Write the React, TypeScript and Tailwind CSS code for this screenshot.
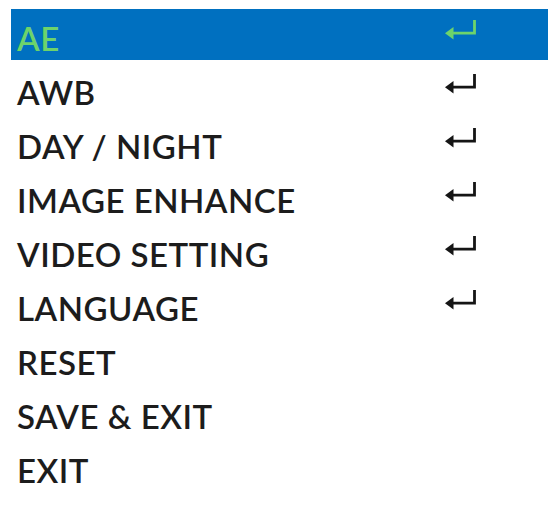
import React from "react";

const items = [
  { label: "AE", arrow: true },
  { label: "AWB", arrow: true },
  { label: "DAY / NIGHT", arrow: true },
  { label: "IMAGE ENHANCE", arrow: true },
  { label: "VIDEO SETTING", arrow: true },
  { label: "LANGUAGE", arrow: true },
  { label: "RESET", arrow: false },
  { label: "SAVE & EXIT", arrow: false },
  { label: "EXIT", arrow: false },
];

function EnterArrow({ color }: { color: string }) {
  return (
    <svg width="32" height="20" viewBox="0 0 32 20" className="mb-[16px] shrink-0">
      <path d="M29.5 0 V13.2 H6" fill="none" stroke={color} strokeWidth="2.8" />
      <polygon points="0,13.2 8.5,7 8.5,19.5" fill={color} />
    </svg>
  );
}

export default function App() {
  return (
    <div
      className="w-[548px] h-[506px] bg-white pt-[9px] pl-[11px]"
      style={{ fontFamily: "Lato, 'Liberation Sans', sans-serif" }}
    >
      {items.map((it, i) => {
        const active = i === 0;
        return (
          <div
            key={it.label}
            className={
              active
                ? "flex items-center h-[51px] pt-[7px] bg-[#0070c0]"
                : i === 1
                ? "flex items-center h-[54px] mt-[5px]"
                : "flex items-center h-[54px]"
            }
          >
            <span
              className={
                "w-[434px] pl-[6px] text-[33px] font-semibold leading-none whitespace-nowrap tracking-[0.5px] " +
                (active ? "text-[#6dd36b]" : "text-[#1c1c1c]")
              }
            >
              {it.label}
            </span>
            {it.arrow && <EnterArrow color={active ? "#6dd36b" : "#151515"} />}
          </div>
        );
      })}
    </div>
  );
}
